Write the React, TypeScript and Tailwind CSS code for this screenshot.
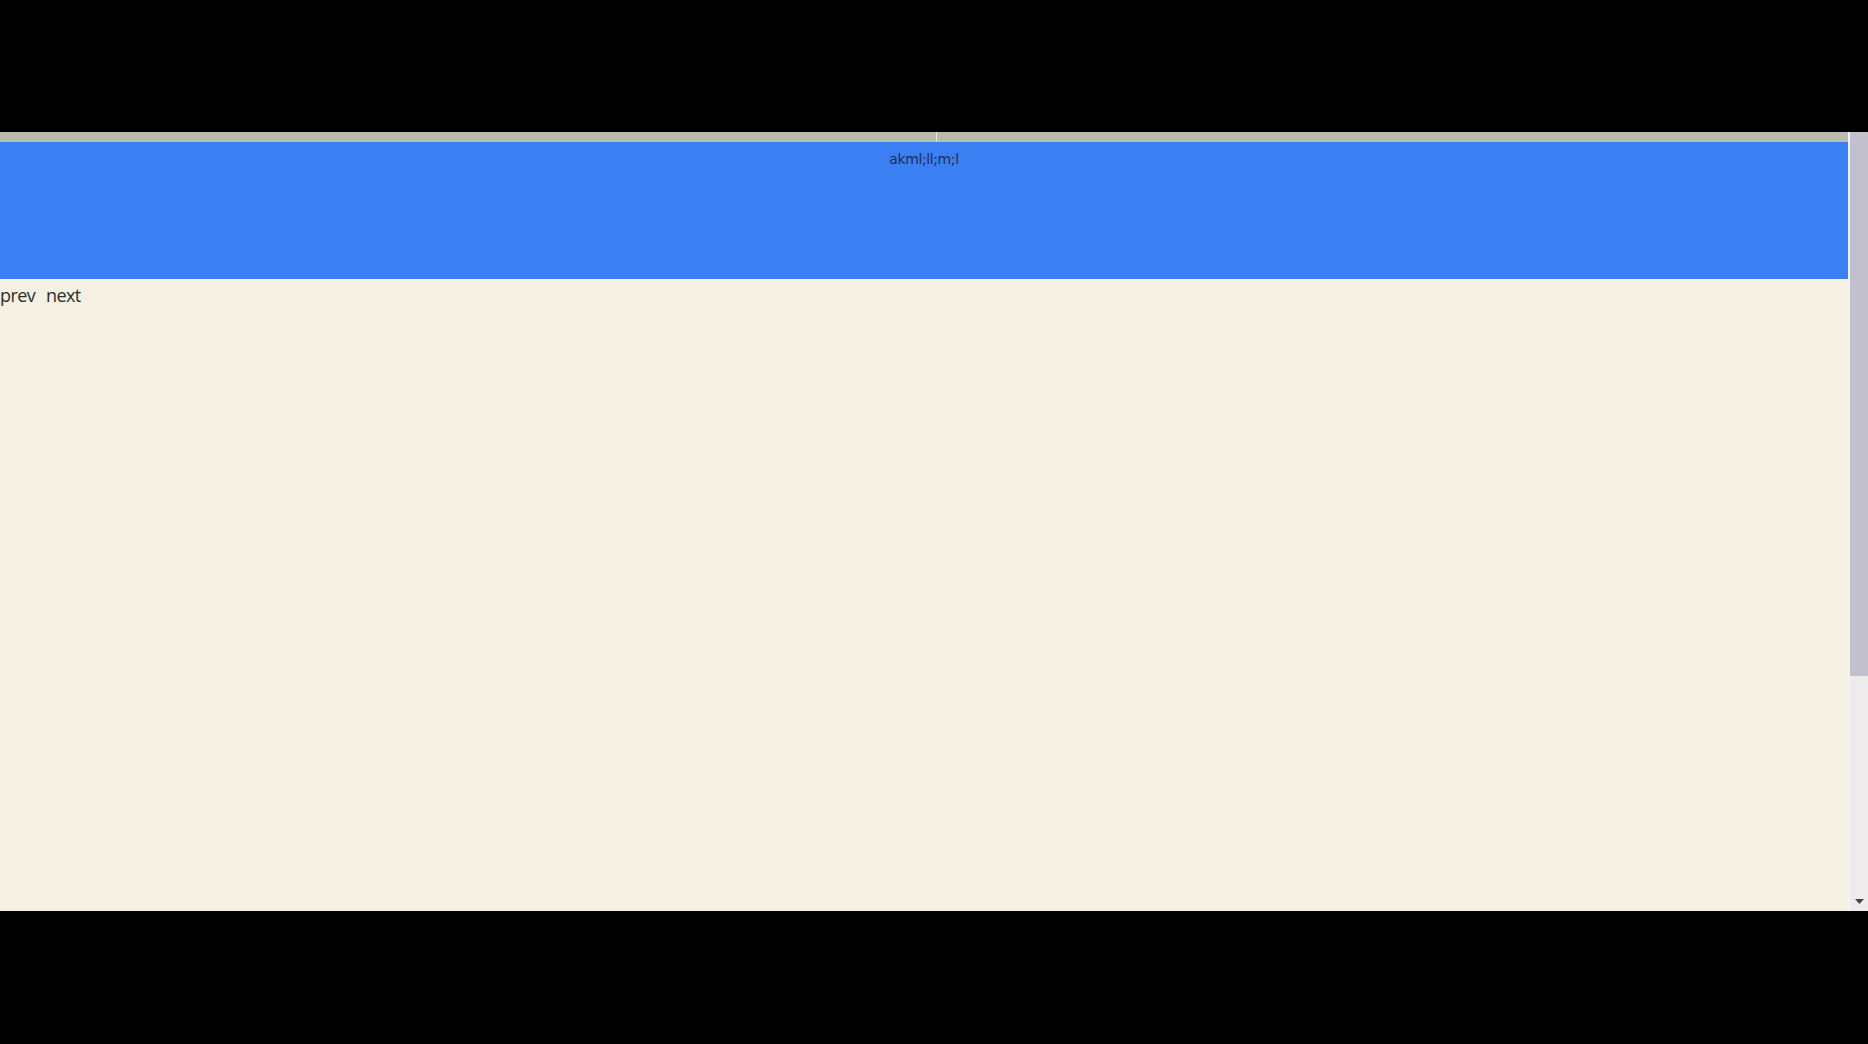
export default function App() {
  return (
    <div className="h-screen w-full bg-black flex flex-col overflow-hidden font-['DejaVu_Sans',sans-serif]">
      <div className="h-[132px] shrink-0" />
      <div className="h-[779px] shrink-0 flex">
        {/* page */}
        <div className="flex-1 flex flex-col bg-[#f4f0e2]">
          <div className="h-[10px] bg-[#bcb9ae] flex">
            <div className="w-[936px] h-full" />
            <div className="w-px h-full bg-[#e8e4d8]" />
          </div>
          <div className="h-[137px] bg-[#3a80f2] flex justify-center pt-[7px]">
            <span className="text-[14px] leading-5 tracking-[-0.4px] text-[#1d2f52]">akml;ll;m;l</span>
          </div>
          <div className="flex gap-[11px] pt-[4px] text-[18px] leading-6 text-[#2e2e2e] font-['Open_Sans',sans-serif] tracking-[-0.6px]">
            <span>prev</span>
            <span>next</span>
          </div>
        </div>
        {/* scrollbar */}
        <div className="w-[20px] flex">
          <div className="w-[2px] bg-[#f4f2f4]" />
          <div className="flex-1 flex flex-col bg-[#eeebec]">
            <div className="h-[544px] bg-[#c2c0cc]" />
            <div className="flex-1 flex items-end justify-center pb-[7px]">
              <svg width="9" height="5" viewBox="0 0 9 5">
                <path d="M0 0h9L4.5 5z" fill="#444" />
              </svg>
            </div>
          </div>
        </div>
      </div>
    </div>
  );
}
